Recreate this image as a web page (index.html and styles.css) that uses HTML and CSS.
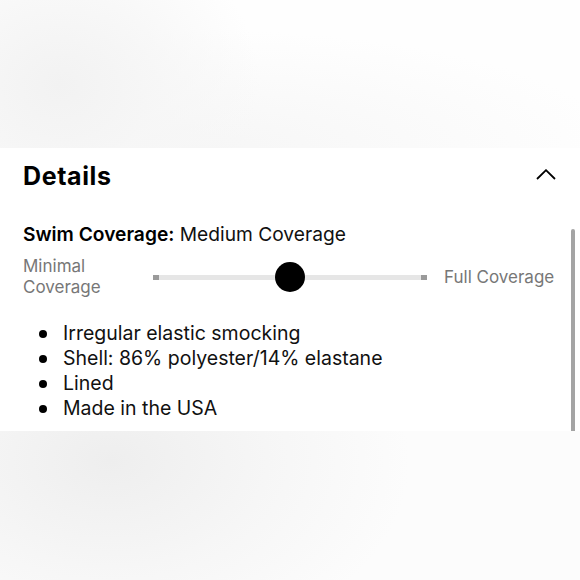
FILE: index.html
```html
<!DOCTYPE html>
<html lang="en">
<head>
<meta charset="utf-8">
<title>Details</title>
<link rel="stylesheet" href="styles.css">
</head>
<body>
<div class="backdrop-top"></div>
<section class="panel">
  <header class="head">
    <h2 class="title">Details</h2>
    <svg class="chevron" width="20" height="11" viewBox="0 0 20 11" aria-hidden="true">
      <polyline points="1,10 10,1.2 19,10" fill="none" stroke="#000" stroke-width="1.8"/>
    </svg>
  </header>
  <p class="coverage"><b>Swim Coverage:</b> Medium Coverage</p>
  <div class="scale">
    <span class="lbl">Minimal<br>Coverage</span>
    <div class="track">
      <span class="end"></span>
      <span class="end"></span>
      <span class="thumb"></span>
    </div>
    <span class="lbl">Full Coverage</span>
  </div>
  <ul class="facts">
    <li>Irregular elastic smocking</li>
    <li>Shell: 86% polyester/14% elastane</li>
    <li>Lined</li>
    <li>Made in the USA</li>
  </ul>
  <div class="scrollbar"></div>
</section>
<div class="backdrop-bottom"></div>
</body>
</html>
```
FILE: styles.css
```css
html, body {
  margin: 0;
  padding: 0;
}
body {
  width: 580px;
  height: 580px;
  overflow: hidden;
  background: #fff;
  font-family: Inter, "Liberation Sans", sans-serif;
  color: #111;
  display: flex;
  flex-direction: column;
}
.backdrop-top {
  height: 148px;
  flex: none;
  background:
    radial-gradient(ellipse 200px 170px at 60px 85px, #f2f2f2 0%, rgba(246,246,246,0.8) 50%, rgba(255,255,255,0) 100%),
    radial-gradient(ellipse 420px 120px at 200px 150px, #f6f6f6 0%, rgba(255,255,255,0) 100%),
    #fefefe;
}
.backdrop-bottom {
  flex: 1;
  background:
    radial-gradient(ellipse 300px 200px at 110px 30px, #eeeeee 0%, rgba(244,244,244,0.7) 55%, rgba(255,255,255,0) 100%),
    #fcfcfc;
}
.panel {
  position: relative;
  flex: none;
  background: #fff;
  padding: 14px 24px 10px 23px;
}
.head {
  display: flex;
  justify-content: space-between;
  align-items: center;
}
.title {
  margin: 0;
  font-size: 25px;
  line-height: 28px;
  font-weight: 700;
  color: #000;
  letter-spacing: 0.6px;
}
.chevron {
  display: block;
  margin-top: -4px;
}
.coverage {
  margin: 32px 0 0;
  font-size: 19.2px;
  line-height: 24px;
  color: #111;
}
.coverage b {
  font-weight: 600;
  color: #000;
}
.scale {
  margin-top: 10px;
  display: grid;
  grid-template-columns: 113px 274px auto;
  column-gap: 17px;
  align-items: center;
}
.lbl {
  font-size: 17px;
  line-height: 21px;
  color: #777;
  white-space: nowrap;
}
.track {
  position: relative;
  height: 5px;
  background: #e6e6e6;
  display: flex;
  justify-content: space-between;
}
.end {
  width: 6px;
  height: 5px;
  background: #9a9a9a;
}
.thumb {
  position: absolute;
  left: 50%;
  top: 50%;
  width: 30px;
  height: 30px;
  margin: -15px 0 0 -15px;
  border-radius: 50%;
  background: #000;
}
.facts {
  list-style: none;
  margin: 23px 0 0;
  padding: 0 0 0 16px;
  font-size: 19.5px;
  line-height: 25px;
  color: #111;
}
.facts li {
  display: flex;
  align-items: center;
  gap: 16px;
}
.facts li::before {
  content: "";
  width: 8px;
  height: 8px;
  border-radius: 50%;
  background: #000;
  flex: none;
  margin-top: 1px;
}
.scrollbar {
  position: absolute;
  right: 5px;
  top: 81px;
  bottom: 0;
  width: 4px;
  border-radius: 2px 2px 0 0;
  background: #a4a4a4;
}
```
